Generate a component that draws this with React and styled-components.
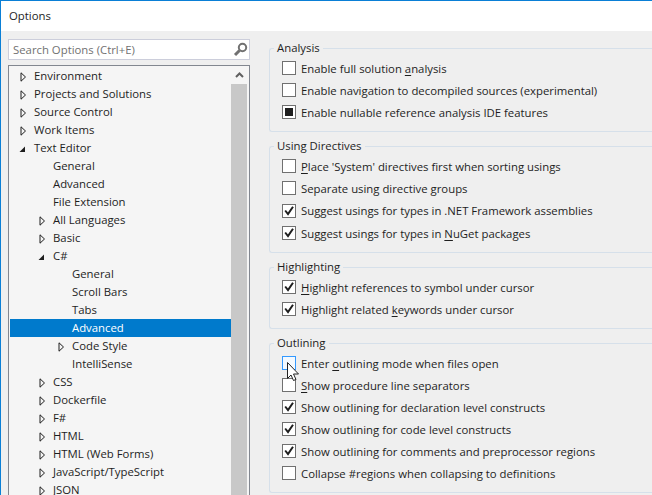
import React from 'react';
import styled, { createGlobalStyle } from 'styled-components';

const GlobalStyle = createGlobalStyle`
  html, body {
    margin: 0;
    padding: 0;
    overflow: hidden;
  }
`;

const Window = styled.div`
  width: 652px;
  height: 495px;
  box-sizing: border-box;
  border-top: 1px solid #0a7fd6;
  border-left: 1px solid #0a7fd6;
  background: #efefef;
  font-family: "Open Sans", "Noto Sans", sans-serif;
  font-size: 11.35px;
  color: #1e1e1e;
  overflow: hidden;
  display: flex;
  flex-direction: column;
`;

const TitleBar = styled.div`
  height: 30px;
  flex: none;
  background: #fff;
  padding-left: 8px;
  line-height: 30px;
`;

const Body = styled.div`
  flex: 1;
  min-height: 0;
  display: flex;
`;

const LeftColumn = styled.div`
  width: 242px;
  flex: none;
  box-sizing: border-box;
  margin-left: 7px;
  padding-top: 8px;
  display: flex;
  flex-direction: column;
  gap: 5px;
`;

const SearchBox = styled.div`
  height: 21px;
  flex: none;
  box-sizing: border-box;
  background: #fff;
  border: 1px solid #ccceDB;
  display: flex;
  align-items: center;
  justify-content: space-between;
  padding: 0 1px 0 4px;
  color: #717171;
`;

const TreeBox = styled.div`
  flex: 1;
  min-height: 0;
  border: 1px solid #828790;
  border-bottom: none;
  padding: 0 1px;
  background: #f5f5f5;
  display: flex;
`;

const TreeList = styled.div`
  flex: 1;
  padding-top: 1px;
`;

const TreeRow = styled.div`
  height: 18px;
  line-height: 18px;
  padding-left: ${(p) => p.$level * 19 + 24}px;
  position: relative;
  white-space: nowrap;
  background: ${(p) => (p.$selected ? '#007acc' : 'transparent')};
  color: ${(p) => (p.$selected ? '#fff' : '#1e1e1e')};
`;

const Arrow = styled.svg`
  position: absolute;
  left: ${(p) => p.$level * 19 + (p.$open ? 9 : 10)}px;
  top: ${(p) => (p.$open ? 6 : 5)}px;
`;

const ScrollBar = styled.div`
  width: 16px;
  flex: none;
  margin-right: 1px;
  display: flex;
  flex-direction: column;
`;

const ScrollUp = styled.div`
  height: 18px;
  flex: none;
  display: flex;
  align-items: center;
  justify-content: center;
`;

const ScrollThumb = styled.div`
  flex: 1;
  background: #c8c8c8;
`;

const RightColumn = styled.div`
  flex: 1;
  min-width: 0;
  padding: 9px 0 0 19px;
  display: flex;
  flex-direction: column;
  gap: 6px;
`;

const Group = styled.fieldset`
  margin: 0;
  padding: 1px 0 8px 12px;
  min-width: 0;
  border: 1px solid #d6e0ea;
  border-right: none;
  border-radius: 3px 0 0 3px;
`;

const Legend = styled.legend`
  padding: 0 3px;
  margin-left: -8px;
  line-height: 16px;
`;

const OptionRow = styled.div`
  display: flex;
  align-items: center;
  gap: 5px;
  height: ${(p) => (p.$tall ? 23 : 22)}px;
  white-space: nowrap;
`;

const BoxWrap = styled.div`
  position: relative;
  display: flex;
  flex: none;
`;

const Box = styled.div`
  width: 14px;
  height: 14px;
  box-sizing: border-box;
  border: 1px solid ${(p) => (p.$hover ? '#3399ff' : '#707070')};
  background: ${(p) => (p.$hover ? '#f3f9ff' : '#fff')};
  display: flex;
  align-items: center;
  justify-content: center;
`;

const Mixed = styled.div`
  width: 8px;
  height: 8px;
  background: #1e1e1e;
`;

const Cursor = styled.svg`
  position: absolute;
  left: 5px;
  top: 6px;
  z-index: 1;
`;

const Key = styled.span`
  text-decoration: underline;
  text-underline-offset: 2px;
`;

const tree = [
  { label: 'Environment', level: 0, arrow: 'closed' },
  { label: 'Projects and Solutions', level: 0, arrow: 'closed' },
  { label: 'Source Control', level: 0, arrow: 'closed' },
  { label: 'Work Items', level: 0, arrow: 'closed' },
  { label: 'Text Editor', level: 0, arrow: 'open' },
  { label: 'General', level: 1 },
  { label: 'Advanced', level: 1 },
  { label: 'File Extension', level: 1 },
  { label: 'All Languages', level: 1, arrow: 'closed' },
  { label: 'Basic', level: 1, arrow: 'closed' },
  { label: 'C#', level: 1, arrow: 'open' },
  { label: 'General', level: 2 },
  { label: 'Scroll Bars', level: 2 },
  { label: 'Tabs', level: 2 },
  { label: 'Advanced', level: 2, selected: true },
  { label: 'Code Style', level: 2, arrow: 'closed' },
  { label: 'IntelliSense', level: 2 },
  { label: 'CSS', level: 1, arrow: 'closed' },
  { label: 'Dockerfile', level: 1, arrow: 'closed' },
  { label: 'F#', level: 1, arrow: 'closed' },
  { label: 'HTML', level: 1, arrow: 'closed' },
  { label: 'HTML (Web Forms)', level: 1, arrow: 'closed' },
  { label: 'JavaScript/TypeScript', level: 1, arrow: 'closed' },
  { label: 'JSON', level: 1, arrow: 'closed' },
];

const groups = [
  {
    title: 'Analysis',
    options: [
      { before: 'Enable full solution ', key: 'a', after: 'nalysis' },
      { before: 'Enable navigation to decompiled sources (experimental)' },
      { before: 'Enable nullable reference analysis IDE features', state: 'mixed' },
    ],
  },
  {
    title: 'Using Directives',
    options: [
      { key: 'P', after: "lace 'System' directives first when sorting usings" },
      { before: 'Separate using directive groups' },
      { before: 'Suggest usings for types in .NET Framework assemblies', state: 'checked', tall: true },
      { before: 'Suggest usings for types in ', key: 'N', after: 'uGet packages', state: 'checked' },
    ],
  },
  {
    title: 'Highlighting',
    options: [
      { key: 'H', after: 'ighlight references to symbol under cursor', state: 'checked' },
      { before: 'Highlight related ', key: 'k', after: 'eywords under cursor', state: 'checked' },
    ],
  },
  {
    title: 'Outlining',
    options: [
      { before: 'Enter ', key: 'o', after: 'utlining mode when files open', hover: true },
      { key: 'S', after: 'how procedure line separators' },
      { before: 'Show outlining for declaration level constructs', state: 'checked' },
      { before: 'Show outlining for code level constructs', state: 'checked' },
      { before: 'Show outlining for comments and preprocessor regions', state: 'checked' },
      { before: 'Collapse #regions when collapsing to definitions' },
    ],
  },
];

function TreeArrow({ type, level }) {
  if (type === 'open') {
    return (
      <Arrow $open $level={level} width="7" height="8" viewBox="0 0 7 8">
        <path d="M6 1.5V7H0.5Z" fill="#1e1e1e" />
      </Arrow>
    );
  }
  return (
    <Arrow $level={level} width="7" height="10" viewBox="0 0 7 10">
      <path d="M1 0.8L5.5 5L1 9.2Z" fill="none" stroke="#1e1e1e" />
    </Arrow>
  );
}

function Check() {
  return (
    <svg width="12" height="12" viewBox="0 0 12 12">
      <path d="M2.2 5.5L5 9L10 1.8" fill="none" stroke="#1e1e1e" strokeWidth="2" />
    </svg>
  );
}

function Option({ option }) {
  return (
    <OptionRow $tall={option.tall}>
      <BoxWrap>
        <Box $hover={option.hover}>
          {option.state === 'mixed' && <Mixed />}
          {option.state === 'checked' && <Check />}
        </Box>
        {option.hover && (
          <Cursor width="13" height="20" viewBox="0 0 13 20">
            <path d="M0.5 0.5V16.5L4 13L6.5 18.5L9 17.5L6.5 12H11.5Z" fill="#fff" stroke="#222" />
          </Cursor>
        )}
      </BoxWrap>
      <span>
        {option.before}
        {option.key && <Key>{option.key}</Key>}
        {option.after}
      </span>
    </OptionRow>
  );
}

export default function App() {
  return (
    <Window>
      <GlobalStyle />
      <TitleBar>Options</TitleBar>
      <Body>
        <LeftColumn>
          <SearchBox>
            <span>Search Options (Ctrl+E)</span>
            <svg width="15" height="15" viewBox="0 0 15 15">
              <circle cx="9.5" cy="5.5" r="3.7" fill="none" stroke="#717171" strokeWidth="2" />
              <path d="M6.5 8.5L2 13" fill="none" stroke="#717171" strokeWidth="3" />
            </svg>
          </SearchBox>
          <TreeBox>
            <TreeList>
              {tree.map((item, i) => (
                <TreeRow key={i} $level={item.level} $selected={item.selected}>
                  {item.arrow && <TreeArrow type={item.arrow} level={item.level} />}
                  {item.label}
                </TreeRow>
              ))}
            </TreeList>
            <ScrollBar>
              <ScrollUp>
                <svg width="9" height="6" viewBox="0 0 9 6">
                  <path d="M1 5L4.5 1.5L8 5" fill="none" stroke="#606060" strokeWidth="2" />
                </svg>
              </ScrollUp>
              <ScrollThumb />
            </ScrollBar>
          </TreeBox>
        </LeftColumn>
        <RightColumn>
          {groups.map((group) => (
            <Group key={group.title}>
              <Legend>{group.title}</Legend>
              {group.options.map((option, i) => (
                <Option key={i} option={option} />
              ))}
            </Group>
          ))}
        </RightColumn>
      </Body>
    </Window>
  );
}
